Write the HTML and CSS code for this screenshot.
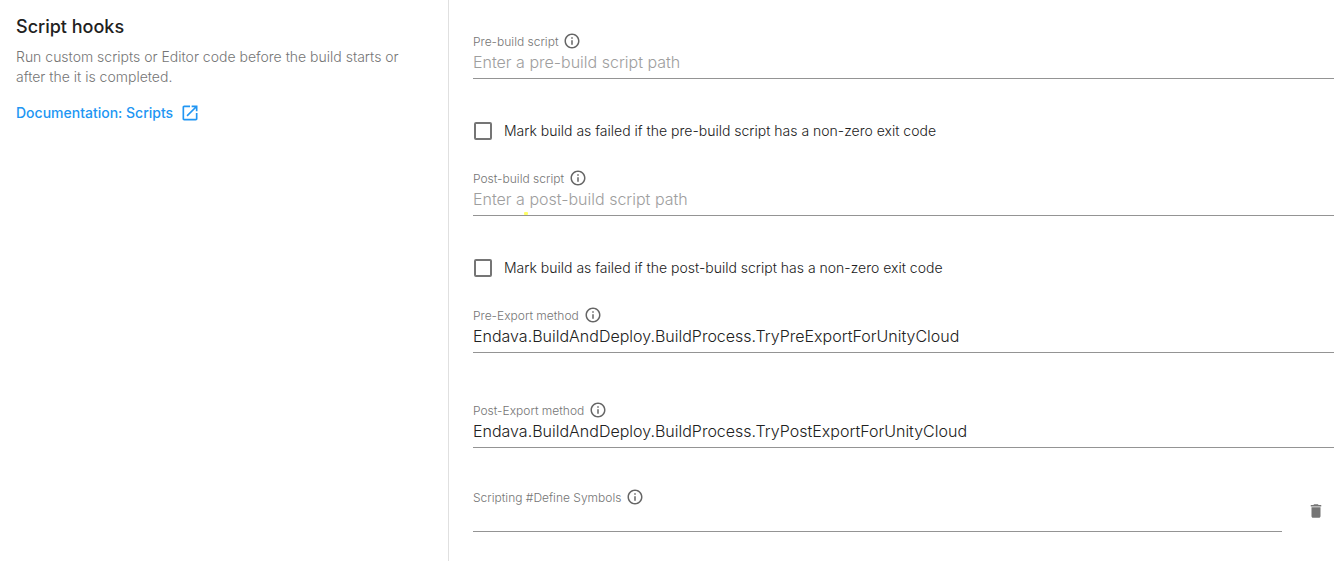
FILE: index.html
```html
<!DOCTYPE html>
<html lang="en">
<head>
<meta charset="utf-8">
<title>Script hooks</title>
<link rel="stylesheet" href="styles.css">
</head>
<body>
<svg class="defs" aria-hidden="true">
  <symbol id="info" viewBox="0 0 24 24"><path d="M11 7h2v2h-2zm0 4h2v6h-2zm1-9C6.480 2 2 6.480 2 12s4.480 10 10 10 10-4.480 10-10S17.520 2 12 2zm0 18c-4.410 0-8-3.590-8-8s3.590-8 8-8 8 3.590 8 8-3.590 8-8 8z"/></symbol>
</svg>
<main class="page">
  <aside class="intro">
    <h1 class="title">Script hooks</h1>
    <p class="description">Run custom scripts or Editor code before the build starts or after the it is completed.</p>
    <a class="doc-link" href="#">Documentation: Scripts
      <svg class="open-icon" viewBox="0 0 24 24" aria-hidden="true"><path d="M19 19H5V5h7V3H5c-1.110 0-2 .9-2 2v14c0 1.100.89 2 2 2h14c1.100 0 2-.9 2-2v-7h-2v7zM14 3v2h3.590l-9.830 9.830 1.410 1.410L19 6.410V10h2V3h-7z"/></svg>
    </a>
  </aside>
  <form class="fields">
    <div class="field">
      <label class="label" for="pre-build">Pre-build script <svg class="info-icon"><use href="#info"/></svg></label>
      <input class="input" id="pre-build" type="text" placeholder="Enter a pre-build script path">
    </div>
    <label class="check"><input class="box" type="checkbox">Mark build as failed if the pre-build script has a non-zero exit code</label>
    <div class="field">
      <label class="label" for="post-build">Post-build script <svg class="info-icon"><use href="#info"/></svg></label>
      <div class="marked"><input class="input" id="post-build" type="text" placeholder="Enter a post-build script path"><span class="mark"></span></div>
    </div>
    <label class="check"><input class="box" type="checkbox">Mark build as failed if the post-build script has a non-zero exit code</label>
    <div class="field">
      <label class="label" for="pre-export">Pre-Export method <svg class="info-icon"><use href="#info"/></svg></label>
      <input class="input" id="pre-export" type="text" value="Endava.BuildAndDeploy.BuildProcess.TryPreExportForUnityCloud">
    </div>
    <div class="field field-spaced">
      <label class="label" for="post-export">Post-Export method <svg class="info-icon"><use href="#info"/></svg></label>
      <input class="input" id="post-export" type="text" value="Endava.BuildAndDeploy.BuildProcess.TryPostExportForUnityCloud">
    </div>
    <div class="symbol-row">
      <div class="field">
        <label class="label" for="symbols">Scripting #Define Symbols <svg class="info-icon"><use href="#info"/></svg></label>
        <input class="input input-short" id="symbols" type="text">
      </div>
      <button class="delete" type="button" aria-label="Delete symbol"><svg class="delete-icon" viewBox="0 0 24 24"><path d="M6 19c0 1.100.9 2 2 2h8c1.100 0 2-.9 2-2V7H6v12zM19 4h-3.500l-1-1h-5l-1 1H5v2h14V4z"/></svg></button>
    </div>
  </form>
</main>
</body>
</html>
```

FILE: styles.css
```css
* { box-sizing: border-box; }
body { margin: 0; background: #fff; color: #212121; font-family: Inter, "Liberation Sans", sans-serif; }
.defs { position: absolute; width: 0; height: 0; }
.page { display: flex; min-height: 100vh; }
.intro { flex: 0 0 449px; padding: 16px 32px 16px 16px; border-right: 1px solid #e0e0e0; }
.title { margin: 0; font-size: 18px; font-weight: 500; line-height: 22px; }
.description { margin: 9px 0 15px; font-size: 14px; font-weight: 300; line-height: 20px; color: #757575; }
.doc-link { display: inline-flex; align-items: center; gap: 7px; font-size: 14px; font-weight: 500; line-height: 20px; color: #2196f3; text-decoration: none; }
.open-icon { width: 20px; height: 20px; fill: currentColor; }
.fields { flex: 1; min-width: 0; padding: 32px 7px 24px 24px; }
.field { flex: 1; min-width: 0; }
.label { display: flex; align-items: center; gap: 5px; height: 18px; font-size: 12px; font-weight: 300; color: #757575; }
.info-icon { width: 18px; height: 18px; fill: #666; }
.input { display: block; width: 100%; height: 29px; padding: 2px 0 6px; border: 0; border-bottom: 1px solid #949494; border-radius: 0; outline: 0; background: none; color: #212121; font: 300 16px/20px Inter, "Liberation Sans", sans-serif; }
.input::placeholder { color: #9e9e9e; opacity: 1; }
.input-short { height: 26px; padding-bottom: 3px; }
.check { display: flex; align-items: center; gap: 12px; height: 20px; margin: 42px 0 28px; font-size: 14px; font-weight: 300; line-height: 18px; color: #212121; }
.box { appearance: none; flex: none; width: 18px; height: 18px; margin: 0 0 0 1px; border: 2px solid #757575; border-radius: 2px; }
.box:checked { background: #2196f3; }
.marked { position: relative; }
.mark { position: absolute; left: 51px; bottom: 1px; width: 4px; height: 3px; border-radius: 1px; background: #ffff66; }
.field-spaced { margin-top: 48px; }
.symbol-row { display: flex; align-items: center; gap: 16px; margin-top: 40px; }
.delete { display: flex; justify-content: center; width: 36px; padding: 2px 0 0; border: 0; background: none; }
.delete-icon { width: 18px; height: 18px; fill: #757575; }
```
